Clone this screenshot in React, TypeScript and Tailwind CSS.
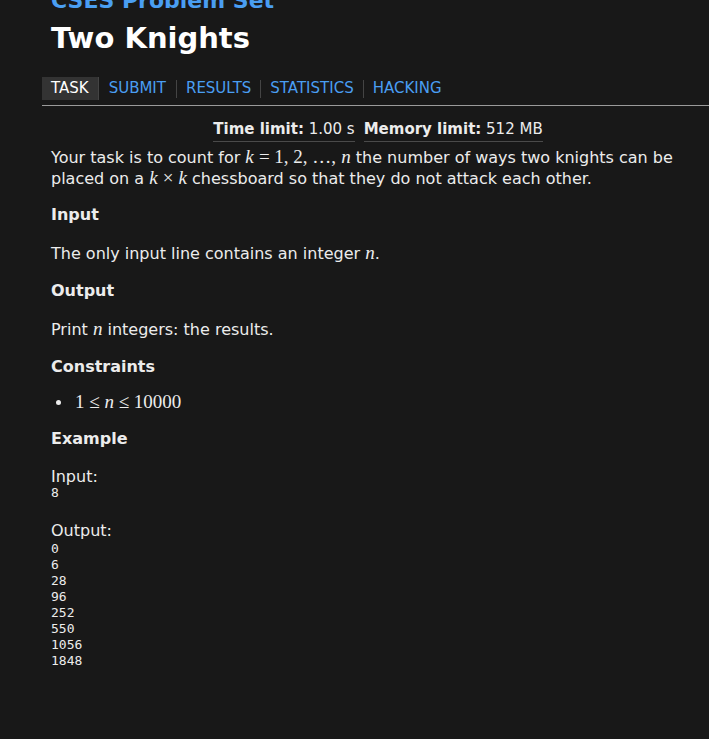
import React from 'react'

const serif = { fontFamily: '"Liberation Serif", "DejaVu Serif", serif' }

const M = ({ children }: { children: React.ReactNode }) => (
    <span className="italic text-[19px] leading-none" style={serif}>{children}</span>
)
const R = ({ children }: { children: React.ReactNode }) => (
    <span className="text-[19px] leading-none" style={serif}>{children}</span>
)

const tabs = ['SUBMIT', 'RESULTS', 'STATISTICS', 'HACKING']
const output = ['0', '6', '28', '96', '252', '550', '1056', '1848']

const App: React.FC = () => {
    return (
        <div className="w-[709px] h-[739px] overflow-hidden bg-[#181818] text-[#ececec] font-['DejaVu_Sans',sans-serif] text-[16px]">
            <div className="pl-[42px]">
                <div className="pl-[9px] -mt-[12px] text-[22px] font-bold text-[#4a9ef2] leading-[26px]">CSES Problem Set</div>
                <h1 className="pl-[9px] mt-[6px] text-[29px] font-bold text-white leading-[36px]">Two Knights</h1>
                <div className="mt-[21px] flex items-center text-[15px] border-b border-[#9a9a9a] pb-[5px]">
                    <span className="bg-[#333333] text-white px-[9px] h-[23px] flex items-center">TASK</span>
                    {tabs.map((t, i) => (
                        <span key={t} className="flex items-center">
                            {i > 0 && <span className="h-[18px] border-l border-[#444]" />}
                            <span className={`${i === 0 ? 'px-[10px] border-l border-[#444]' : 'px-[9px]'} text-[#4a9ef2]`}>{t}</span>
                        </span>
                    ))}
                </div>
            </div>
            <div className="pl-[51px] pr-[8px]">
                <div className="mt-[13px] flex justify-center gap-[9px] text-[15px] pl-[4px] leading-[20px]">
                    <span className="border-b border-[#4a4a4a] pb-[2px]"><b>Time limit:</b> 1.00 s</span>
                    <span className="border-b border-[#4a4a4a] pb-[2px]"><b>Memory limit:</b> 512 MB</span>
                </div>
                <p className="mt-[5px] leading-[20px]">
                    Your task is to count for <M>k</M> <R>= 1, 2, …,</R> <M>n</M> the number of ways two knights can be placed on a <M>k</M> <R>×</R> <M>k</M> chessboard so that they do not attack each other.
                </p>
                <h2 className="mt-[16px] font-bold leading-[20px]">Input</h2>
                <p className="mt-[18px] leading-[20px]">The only input line contains an integer <M>n</M>.</p>
                <h2 className="mt-[17px] font-bold leading-[20px]">Output</h2>
                <p className="mt-[18px] leading-[20px]">Print <M>n</M> integers: the results.</p>
                <h2 className="mt-[17px] font-bold leading-[20px]">Constraints</h2>
                <ul className="mt-[15px] pl-[22px] list-disc leading-[20px]">
                    <li className="pl-[2px]"><span className="text-[19px]" style={serif}>1 ≤ <i>n</i> ≤ 10000</span></li>
                </ul>
                <h2 className="mt-[16px] font-bold leading-[20px]">Example</h2>
                <div className="mt-[18px] leading-[20px]">Input:</div>
                <pre className="-mt-[2px] text-[13px] leading-[16px] font-['DejaVu_Sans_Mono',monospace]">8</pre>
                <div className="mt-[20px] leading-[20px]">Output:</div>
                <pre className="text-[13px] leading-[16px] font-['DejaVu_Sans_Mono',monospace]">{output.join('\n')}</pre>
            </div>
        </div>
    )
}

export default App
